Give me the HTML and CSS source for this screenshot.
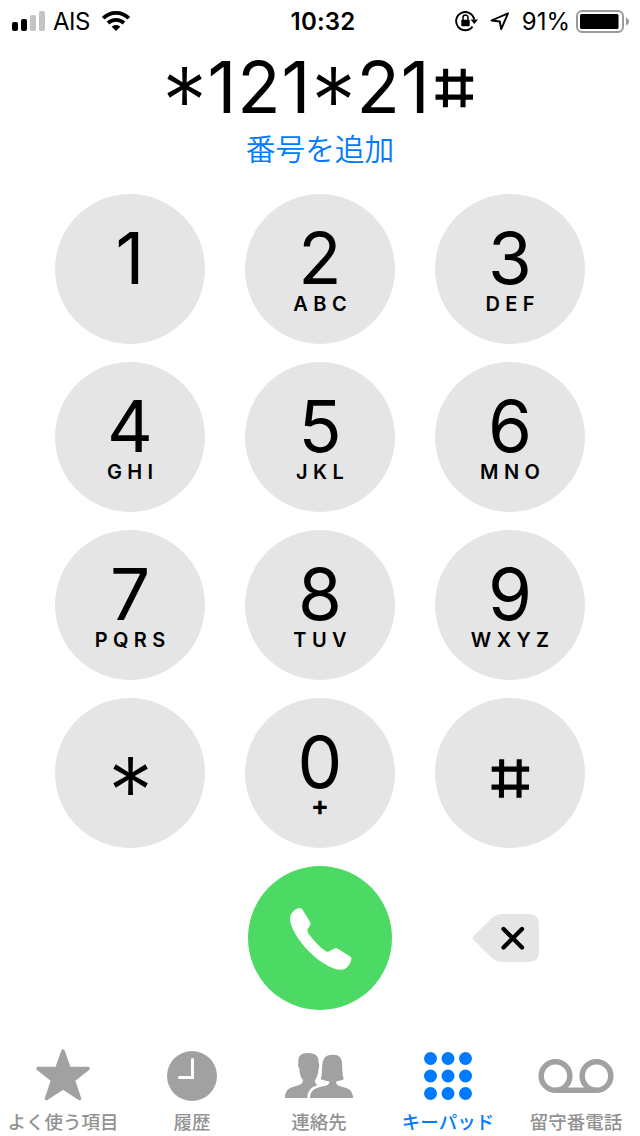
FILE: index.html
```
<!DOCTYPE html>
<html lang="ja">
<head>
<meta charset="utf-8">
<title>電話</title>
<link rel="stylesheet" href="styles.css">
</head>
<body>
<div class="screen">
  <header class="status">
    <div class="status-left">
      <svg width="34" height="20" viewBox="0 0 34 20"><rect x="0" y="11" width="6" height="9" rx="2"/><rect x="9" y="8" width="6" height="12" rx="2"/><g fill="#c4c4c4"><rect x="18" y="4" width="6" height="16" rx="2"/><rect x="27" y="0" width="6" height="20" rx="2"/></g></svg>
      <span class="carrier">AIS</span>
      <svg class="wifi" width="28" height="20" viewBox="0 0 28 20"><g fill="none" stroke="#000" stroke-width="3.8"><path d="M1.3 7.2C8.4.2 19.6.2 26.700 7.200"/><path d="M6 12c4.600-4.200 11.400-4.200 16 0"/></g><path d="M14 20l-4.300-4.300c2.500-2.200 6.100-2.200 8.600 0z"/></svg>
    </div>
    <div class="time">10:32</div>
    <div class="status-right">
      <svg class="lock" width="24" height="22" viewBox="0 0 24 22"><path d="M17.500 16.600A9.100 9.100 0 1 1 19.200 9.500" fill="none" stroke="#000" stroke-width="1.900"/><path d="M15.600 9.500h7.400l-3.700 4.500z"/><rect x="6.300" y="9.800" width="8.400" height="6.400" rx=".8"/><path d="M8 10V7.600a2.500 2.500 0 0 1 5 0V10" fill="none" stroke="#000" stroke-width="1.500"/></svg>
      <svg class="arrow" width="20" height="20" viewBox="0 0 20 20"><path d="M1.500 9.500L18 2.300 11.200 18.200 9.800 10.500z" fill="none" stroke="#000" stroke-width="1.900" stroke-linejoin="round"/></svg>
      <span class="percent">91%</span>
      <svg class="battery" width="54" height="24" viewBox="0 0 54 24"><rect x="1" y="1" width="46" height="21" rx="5" fill="none" stroke="#9b9b9b" stroke-width="2"/><rect x="4" y="4" width="38.500" height="15" rx="1.500"/><path d="M50 7.500v8c4-1.500 4-6.500 0-8z" fill="#9b9b9b"/></svg>
    </div>
  </header>
  <div class="number"><span class="star">*</span>121<span class="star">*</span>21<span class="hash">#</span></div>
  <div class="add">番号を追加</div>
  <main class="keys">
    <div class="key"><b>1</b></div>
    <div class="key"><b>2</b><i>ABC</i></div>
    <div class="key"><b>3</b><i>DEF</i></div>
    <div class="key"><b>4</b><i>GHI</i></div>
    <div class="key"><b>5</b><i>JKL</i></div>
    <div class="key"><b>6</b><i>MNO</i></div>
    <div class="key"><b>7</b><i>PQRS</i></div>
    <div class="key"><b>8</b><i>TUV</i></div>
    <div class="key"><b>9</b><i>WXYZ</i></div>
    <div class="key symbol"><b><span class="star">*</span></b></div>
    <div class="key"><b>0</b><i class="plus">+</i></div>
    <div class="key symbol"><b><span class="hash">#</span></b></div>
  </main>
  <div class="actions">
    <div class="call"><svg width="64" height="64" viewBox="-1 -1 64 64" fill="#fff"><path d="M2.500 6.500C4.500 3 8 1.600 10.800 1.100Q12.500.9 13.600 2.700L21 14.800Q22.500 17 20.600 18.900L18.600 22Q17.600 24.500 19.500 26.800C25 34 30 39.500 36.500 44Q38.800 45.500 41.200 43.800L45.500 41.500Q47 40.600 48.800 41.700L61 49.200Q63 50.500 62.400 52.400C60.500 59 57 62.200 52.500 62.800C43 63 29 54 19 43.500C9 33 1 20 1 11.500Q1.200 8.800 2.500 6.500z"/></svg></div>
    <svg class="delete" width="67" height="48" viewBox="0 0 67 48"><path d="M2 21.500L19.500 4.500Q24 0 30 0H56Q67 0 67 11V37Q67 48 56 48H30Q24 48 19.500 43.500L2 26.500Q-.8 24 2 21.500z" fill="#e5e5e5"/><path d="M31.500 15L50 33.500M50 15L31.500 33.500" stroke="#000" stroke-width="4.300" stroke-linecap="round"/></svg>
  </div>
  <nav class="tabs">
    <div class="tab"><svg width="54" height="52" viewBox="0 0 54 52"><path d="M27 2l6.200 17.500H52L37.300 31 43.500 49.500 27 38.800 10.500 49.500 16.700 31 2 19.500H20.800z" fill="#a1a1a1" stroke="#a1a1a1" stroke-width="3.500" stroke-linejoin="round"/></svg><span>よく使う項目</span></div>
    <div class="tab"><svg width="50" height="52" viewBox="0 0 50 52"><circle cx="25" cy="27" r="25" fill="#a1a1a1"/><path d="M25.500 10.500V28.500H12.500" fill="none" stroke="#fff" stroke-width="3" stroke-linecap="round"/></svg><span>履歴</span></div>
    <div class="tab"><svg width="70" height="52" viewBox="-1 0 70 52" fill="#a1a1a1"><path d="M0 49C0 41 4 39 11 37C16 35.500 18 34.500 18 31C15.500 28 14.500 25 14.500 20C13 18 12.500 15 13.500 14C12.500 7 16 4 23 4C31 4 34.500 8 33.500 14C34.500 15 34.500 18 33.500 20C33 25 32.500 28 30 31C30 34.500 31 35.500 35 37L38 39L30 49z"/><path d="M23.500 50.500C23.500 40 29 38 38 36C42 35 43 35 43 33.500Q38.500 33 34 31C36 27 35.500 22 36 16C36.500 8 40 4.500 46.500 4.500C55 3.500 58.500 8 58.500 17C58.500 24 59 28 60.500 31Q57 33 52.500 33.500C52.500 36 55 36 59 37C67 39 69.500 43 69.500 50.500z" stroke="#fff" stroke-width="2.600"/><rect y="49" width="70" height="3" fill="#fff"/></svg><span>連絡先</span></div>
    <div class="tab active"><svg width="48" height="52" viewBox="0 0 48 52" fill="#007aff"><circle cx="6.500" cy="9.500" r="6.500"/><circle cx="24" cy="9.500" r="6.500"/><circle cx="41.500" cy="9.500" r="6.500"/><circle cx="6.500" cy="27" r="6.500"/><circle cx="24" cy="27" r="6.500"/><circle cx="41.500" cy="27" r="6.500"/><circle cx="6.500" cy="44.500" r="6.500"/><circle cx="24" cy="44.500" r="6.500"/><circle cx="41.500" cy="44.500" r="6.500"/></svg><span>キーパッド</span></div>
    <div class="tab"><svg width="76" height="52" viewBox="0 0 76 52" fill="none" stroke="#a1a1a1" stroke-width="5.500"><circle cx="17.500" cy="27" r="14.300"/><circle cx="58.500" cy="27" r="14.300"/><path d="M17.500 41.300H58.500"/></svg><span>留守番電話</span></div>
  </nav>
</div>
</body>
</html>
```

FILE: styles.css
```
* { box-sizing: border-box; }
body { margin: 0; background: #fff; color: #000; font-family: Inter, "Noto Sans CJK JP", sans-serif; }
svg { display: block; flex: none; }
.screen { width: 640px; height: 1136px; overflow: hidden; }
.status { height: 40px; padding: 0 10px 0 12px; display: grid; grid-template-columns: 1fr auto 1fr; align-items: center; font-size: 24px; line-height: 40px; }
.status-left, .status-right { display: flex; align-items: center; }
.status-right { justify-content: flex-end; }
.carrier { margin-left: 7px; padding-top: 2px; letter-spacing: -.5px; }
.wifi { margin-left: 12px; }
.time { font-weight: 600; letter-spacing: .2px; padding: 2px 0 0 4px; }
.arrow { margin: 0 12px 0 11px; }
.percent { padding-top: 2px; }
.battery { margin: 1px 0 0 6px; }
.number { height: 90px; font-size: 71px; line-height: 95px; letter-spacing: 1px; text-align: center; white-space: pre; }
.star, .hash { display: inline-block; letter-spacing: 0; text-align: center; }
.star { width: 45px; font-weight: 300; transform: translateY(14.5px) scale(1.27, 1.31); }
.hash { width: 47px; clip-path: inset(calc(50% - 19.200px) -8px); transform: translateY(.5px) scaleX(.97) skewX(9deg); }
.symbol .star { transform: translateY(29px) scale(1.27, 1.31); }
.symbol .hash { transform: translateY(16px) scaleX(.97) skewX(9deg); }
.add { height: 64px; font: 350 29.700px/35px "Noto Sans CJK JP", sans-serif; color: #007aff; text-align: center; }
.keys { display: grid; grid-template-columns: repeat(3, 150px); grid-auto-rows: 150px; column-gap: 40px; row-gap: 18px; justify-content: center; }
.key { border-radius: 50%; background: #e5e5e5; display: flex; flex-direction: column; align-items: center; padding-top: 30px; }
.key b { font-weight: 400; font-size: 71px; line-height: 69px; height: 68px; }
.key i { font-style: normal; font-weight: 600; font-size: 20px; line-height: 24px; letter-spacing: 5.400px; margin-right: -5.400px; }
.key .plus { font-size: 27px; font-weight: 700; line-height: 20px; letter-spacing: 0; margin-right: 0; }
.actions { margin-top: 18px; height: 144px; display: grid; grid-template-columns: 1fr 144px 1fr; align-items: center; }
.call { grid-column: 2; width: 144px; height: 144px; border-radius: 50%; background: #4cd964; display: flex; align-items: center; justify-content: center; }
.delete { margin-left: 80px; }
.tabs { margin-top: 39px; display: grid; grid-template-columns: 126px 132px 122px 136px 120px; }
.tab { display: flex; flex-direction: column; align-items: center; color: #929292; font: 500 18.500px/32px "Noto Sans CJK JP", sans-serif; white-space: nowrap; }
.tab span { margin-top: 4px; }
.active { color: #007aff; }
```
